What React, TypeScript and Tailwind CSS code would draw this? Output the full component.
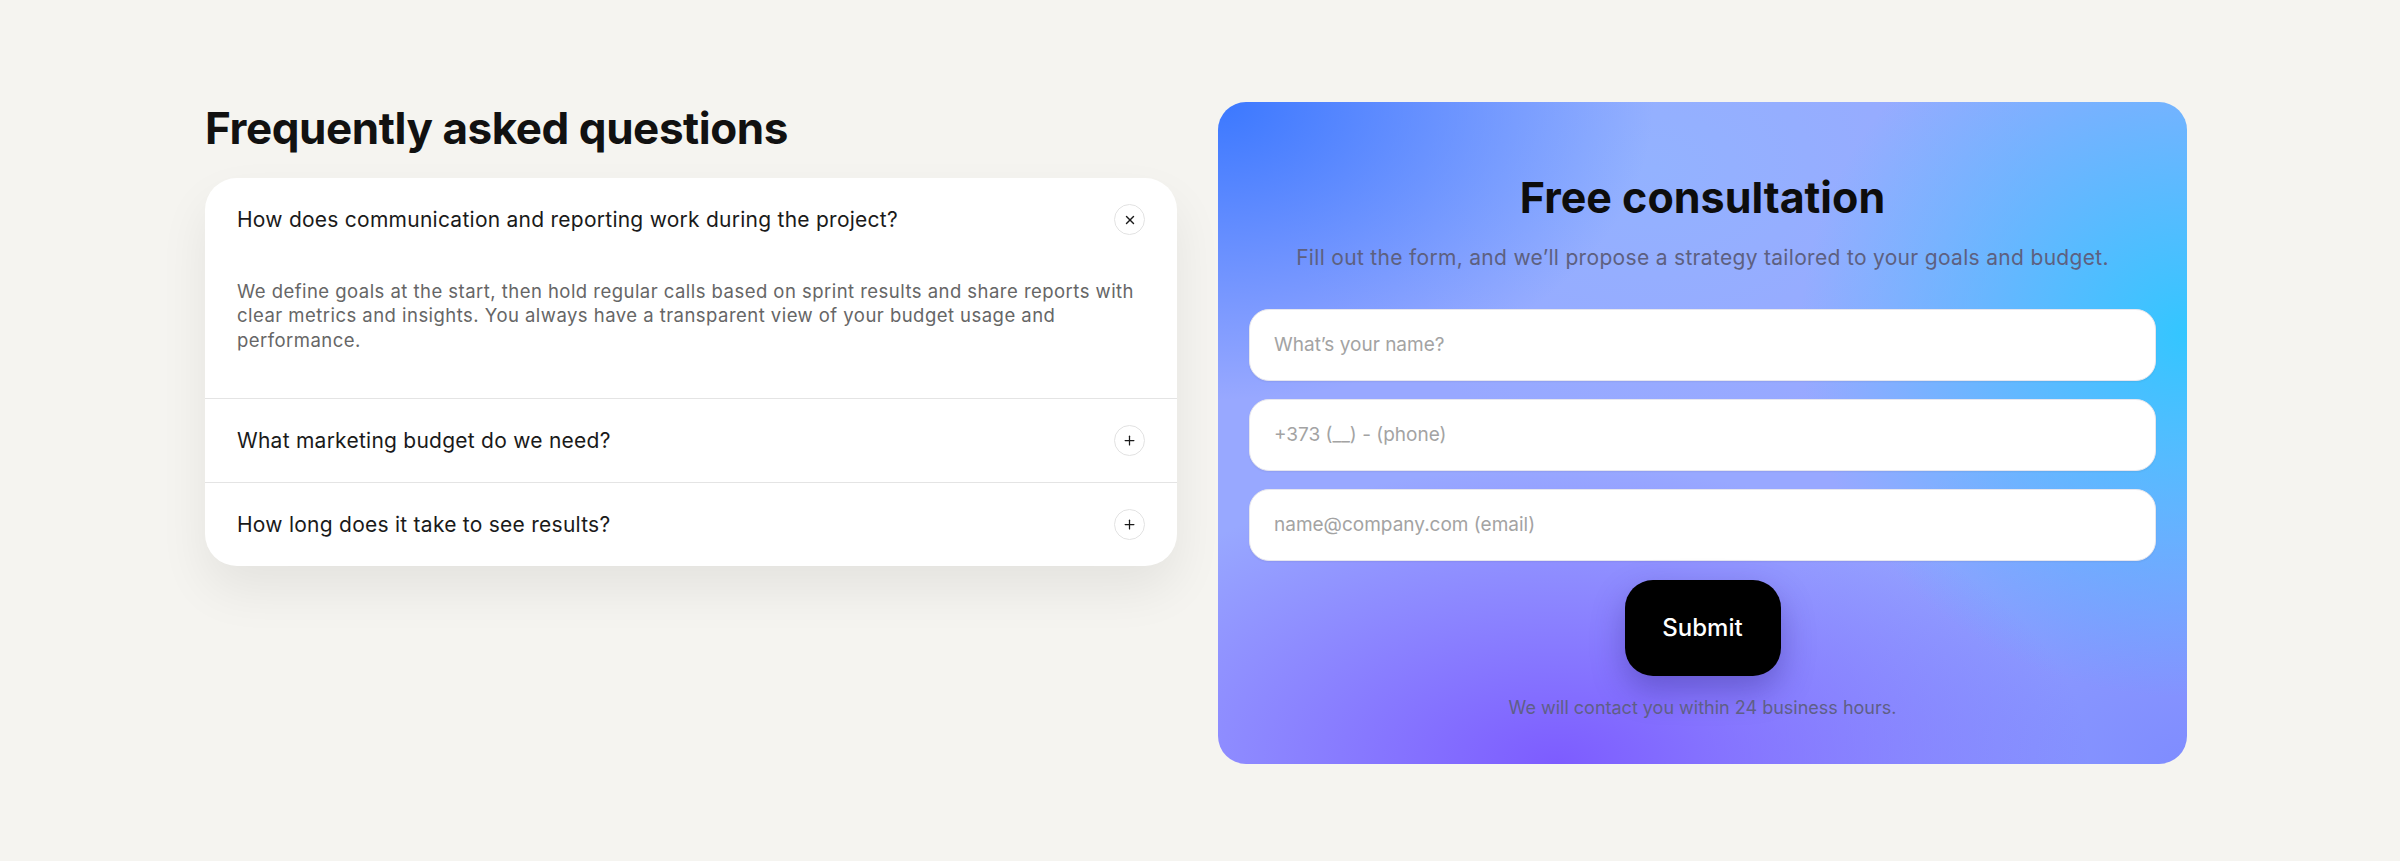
import { Plus, X } from "lucide-react";

const faqs = [
  {
    q: "How does communication and reporting work during the project?",
    a: "We define goals at the start, then hold regular calls based on sprint results and share reports with clear metrics and insights. You always have a transparent view of your budget usage and performance.",
    open: true,
  },
  { q: "What marketing budget do we need?", a: "", open: false },
  { q: "How long does it take to see results?", a: "", open: false },
];

function FaqItem({ q, a, open, first }: { q: string; a: string; open: boolean; first: boolean }) {
  return (
    <div className={first ? "" : "border-t border-[#e4e4e4]"}>
      <div className={`flex items-center justify-between px-8 ${first ? "h-[84px]" : "h-[83px]"}`}>
        <span className="text-[21px] tracking-[0.012em] text-[#1a1a1a]">{q}</span>
        <span className="flex h-[31px] w-[31px] items-center justify-center rounded-full border border-[#e2e2e2] text-[#1a1a1a]">
          {open ? <X size={14} strokeWidth={2.4} /> : <Plus size={15} strokeWidth={2} />}
        </span>
      </div>
      {open && (
        <p className="px-8 pt-[17px] pb-[46px] text-[18.5px] leading-[24.5px] tracking-[0.025em] text-[#666666]">{a}</p>
      )}
    </div>
  );
}

export default function App() {
  return (
    <div
      className="min-h-screen bg-[#f5f4f0] pt-[102px]"
      style={{ fontFamily: "Inter, 'Noto Sans', sans-serif" }}
    >
      <div className="ml-[205px] grid w-[1982px] grid-cols-[972px_969px] items-start gap-[41px]">
        {/* FAQ */}
        <div>
          <h2 className="mb-[23px] text-[44px] leading-[1.2] font-bold tracking-[-0.01em] text-[#111111]">
            Frequently asked questions
          </h2>
          <div className="overflow-hidden rounded-[32px] bg-white shadow-[0_24px_50px_rgba(0,0,0,0.07)]">
            {faqs.map((f, i) => (
              <FaqItem key={f.q} {...f} first={i === 0} />
            ))}
          </div>
        </div>

        {/* Consultation form */}
        <div className="rounded-[28px] bg-[#98a8ff] bg-[radial-gradient(ellipse_45%_45%_at_0%_0%,#3b78ff_0%,rgba(59,120,255,0)_100%),radial-gradient(ellipse_40%_55%_at_100%_35%,#33c6ff_0%,rgba(51,198,255,0)_100%),radial-gradient(ellipse_55%_45%_at_35%_100%,#7d5cff_0%,rgba(125,92,255,0)_100%),radial-gradient(ellipse_50%_50%_at_100%_100%,#7f8cff_0%,rgba(127,140,255,0)_100%),radial-gradient(ellipse_40%_40%_at_45%_10%,#93b2ff_0%,rgba(147,178,255,0)_100%)] px-[31px] pt-[70px] pb-[44px] text-center">
          <h2 className="text-[43px] leading-[1.2] font-bold text-[#0d0d0d]">Free consultation</h2>
          <p className="mt-[20px] text-[21px] leading-[28px] tracking-[0.015em] text-[#5d6080]">
            Fill out the form, and we’ll propose a strategy tailored to your goals and budget.
          </p>
          <form className="mt-[37px] flex flex-col items-center" onSubmit={(e) => e.preventDefault()}>
            <div className="flex w-full flex-col gap-[18px]">
              {["What’s your name?", "+373 (__) - (phone)", "name@company.com (email)"].map((ph) => (
                <input
                  key={ph}
                  placeholder={ph}
                  className="h-[72px] w-full rounded-[20px] border border-[#e6e6ee] bg-white px-6 text-[19px] text-[#222] shadow-[0_1px_2px_rgba(0,0,0,0.06)] outline-none placeholder:text-[#a3a3a3]"
                />
              ))}
            </div>
            <button
              type="submit"
              className="mt-[19px] h-[96px] w-[156px] rounded-[28px] bg-black text-[24px] font-medium text-white shadow-[0_14px_32px_rgba(40,30,120,0.35)]"
            >
              Submit
            </button>
            <p className="mt-[20px] text-[18px] leading-[24px] text-[#5f5f86]">
              We will contact you within 24 business hours.
            </p>
          </form>
        </div>
      </div>
    </div>
  );
}
